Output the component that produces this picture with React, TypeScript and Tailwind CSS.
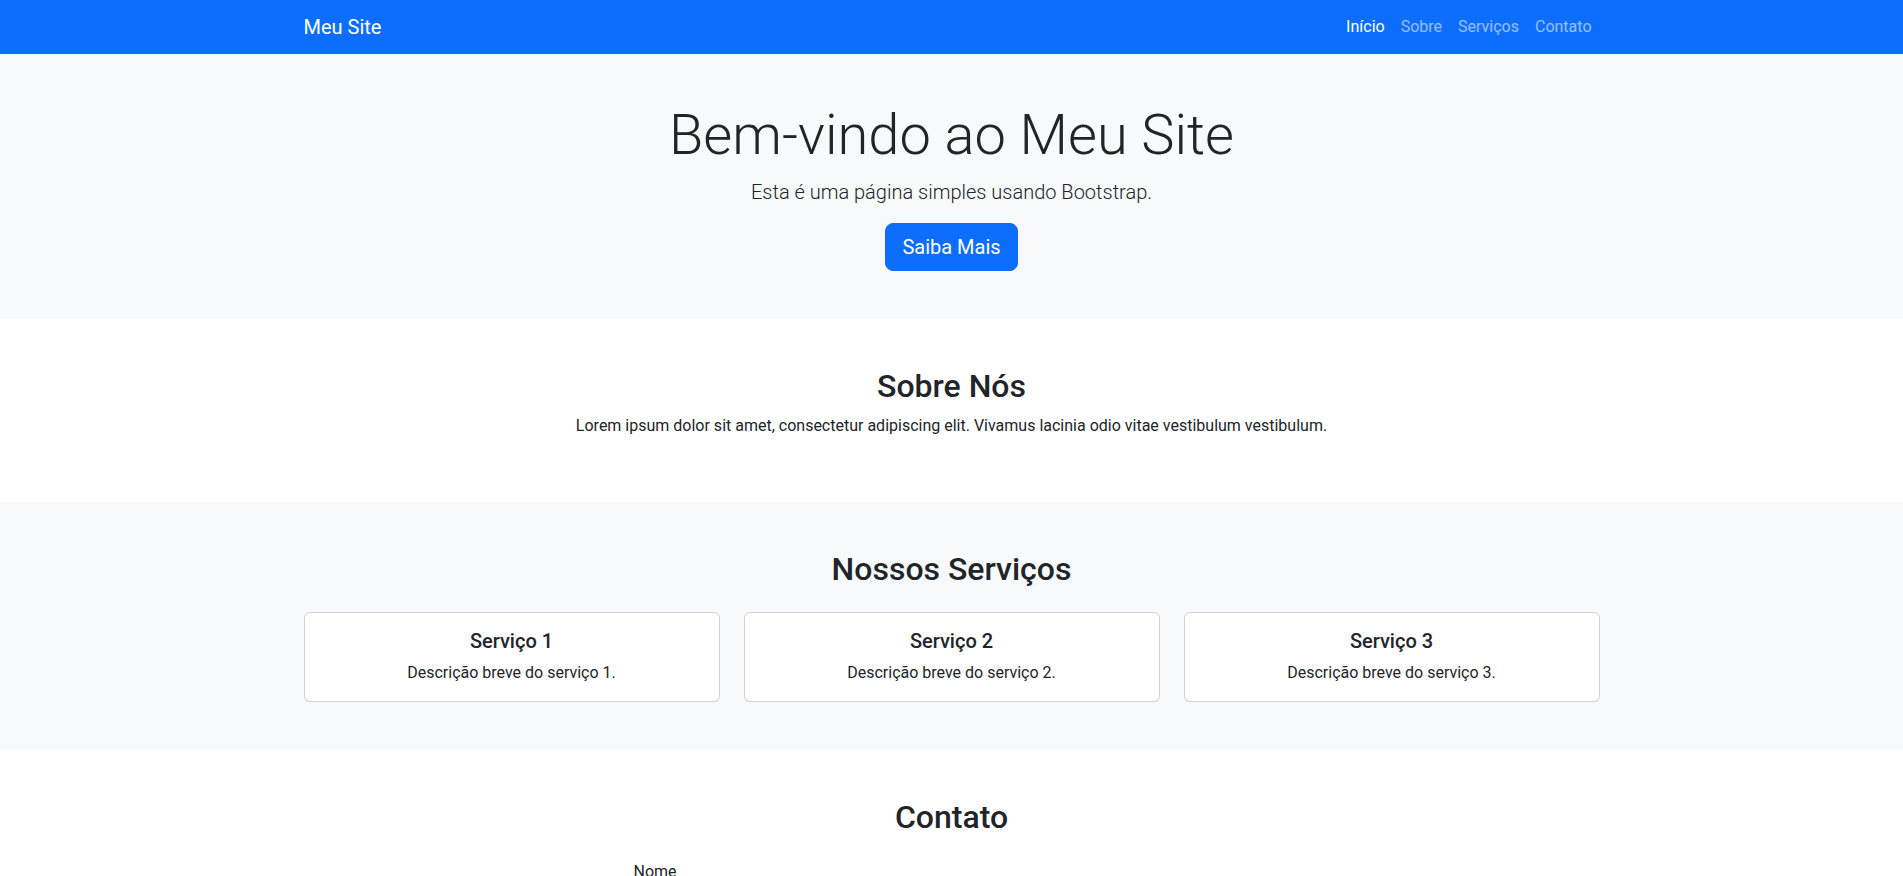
import React from "react";

const services = [1, 2, 3];

export default function App() {
  return (
    <div className="min-h-screen bg-white font-['Roboto','Noto_Sans',sans-serif] text-base leading-normal text-[#212529]">
      <nav className="bg-[#0d6efd]">
        <div className="mx-auto flex h-[54px] max-w-[1320px] items-center justify-between px-3">
          <a href="#" className="mr-4 py-[5px] text-xl leading-[1.5] text-white">
            Meu Site
          </a>
          <ul className="flex">
            <li>
              <a href="#" className="block px-2 py-2 text-white">
                Início
              </a>
            </li>
            <li>
              <a href="#" className="block px-2 py-2 text-white/55">
                Sobre
              </a>
            </li>
            <li>
              <a href="#" className="block px-2 py-2 text-white/55">
                Serviços
              </a>
            </li>
            <li>
              <a href="#" className="block px-2 py-2 text-white/55">
                Contato
              </a>
            </li>
          </ul>
        </div>
      </nav>

      <section className="bg-[#f8f9fa] py-12 text-center">
        <div className="mx-auto max-w-[1320px] px-3">
          <h1 className="mb-2 text-[56px] font-light leading-[1.2]">Bem-vindo ao Meu Site</h1>
          <p className="mb-4 text-xl font-light leading-[1.5]">Esta é uma página simples usando Bootstrap.</p>
          <a
            href="#"
            className="inline-block rounded-lg border border-[#0d6efd] bg-[#0d6efd] px-4 py-2 text-xl leading-[1.5] text-white"
          >
            Saiba Mais
          </a>
        </div>
      </section>

      <section className="py-12 text-center">
        <div className="mx-auto max-w-[1320px] px-3">
          <h2 className="mb-2 text-[32px] font-medium leading-[1.2]">Sobre Nós</h2>
          <p className="mb-4">
            Lorem ipsum dolor sit amet, consectetur adipiscing elit. Vivamus lacinia odio vitae vestibulum vestibulum.
          </p>
        </div>
      </section>

      <section className="bg-[#f8f9fa] py-12 text-center">
        <div className="mx-auto max-w-[1320px] px-3">
          <h2 className="mb-6 text-[32px] font-medium leading-[1.2]">Nossos Serviços</h2>
          <div className="grid grid-cols-3 gap-6">
            {services.map((n) => (
              <div key={n} className="rounded-md border border-black/[0.175] bg-white p-4">
                <h5 className="mb-2 text-xl font-medium leading-[1.2]">Serviço {n}</h5>
                <p>Descrição breve do serviço {n}.</p>
              </div>
            ))}
          </div>
        </div>
      </section>

      <section className="py-12">
        <div className="mx-auto max-w-[1320px] px-3">
          <h2 className="mb-6 text-center text-[32px] font-medium leading-[1.2]">Contato</h2>
          <form className="mx-auto w-[636px]">
            <div className="mb-4">
              <label className="mb-2 inline-block">Nome</label>
              <input className="block w-full rounded-md border border-[#dee2e6] px-3 py-1.5" />
            </div>
            <div className="mb-4">
              <label className="mb-2 inline-block">Email</label>
              <input className="block w-full rounded-md border border-[#dee2e6] px-3 py-1.5" />
            </div>
            <div className="mb-4">
              <label className="mb-2 inline-block">Mensagem</label>
              <textarea rows={3} className="block w-full rounded-md border border-[#dee2e6] px-3 py-1.5" />
            </div>
            <button className="rounded-md bg-[#0d6efd] px-3 py-1.5 text-white">Enviar</button>
          </form>
        </div>
      </section>
    </div>
  );
}
